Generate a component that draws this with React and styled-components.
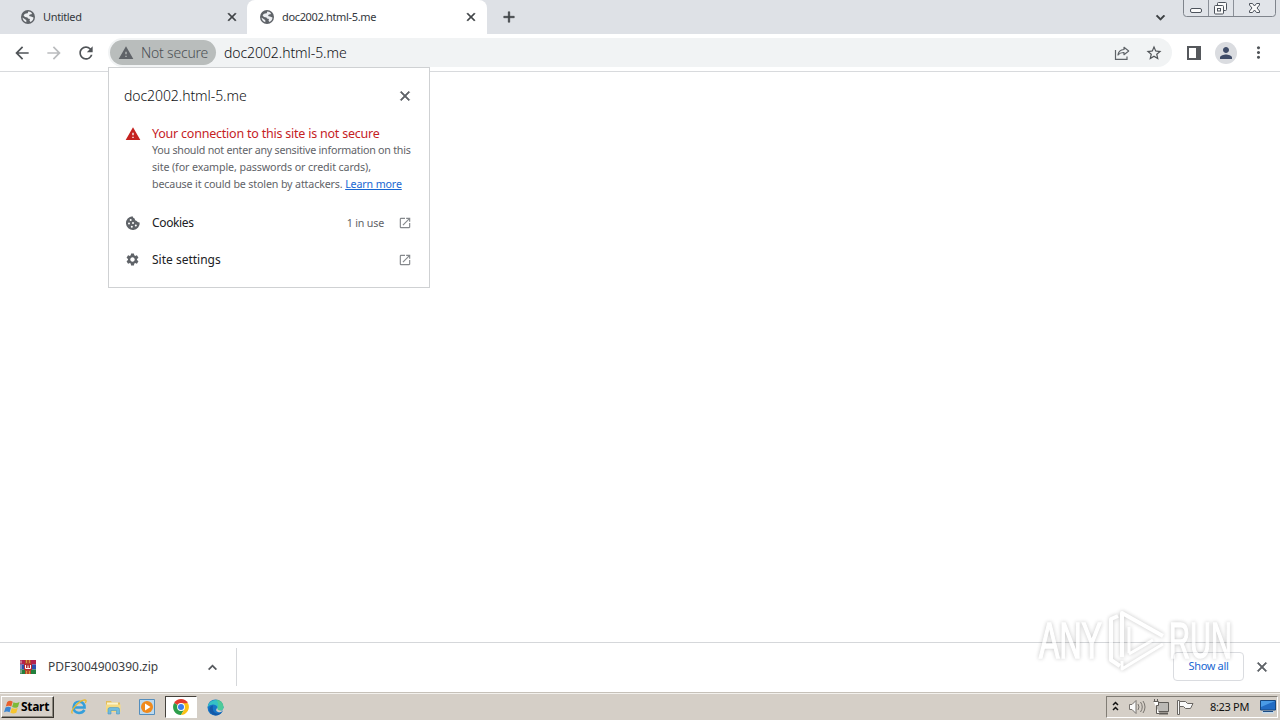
import React from "react";
import styled, { createGlobalStyle } from "styled-components";
import {
  MdArrowBack,
  MdArrowForward,
  MdRefresh,
  MdWarning,
  MdClose,
  MdAdd,
  MdExpandMore,
  MdExpandLess,
  MdStarBorder,
  MdMoreVert,
  MdPerson,
  MdSettings,
  MdOpenInNew,
} from "react-icons/md";

function App() {
  return (
    <Screen>
      <GlobalStyle />
      <TabStrip>
        <Tab $width={239}>
          <GlobeIcon />
          <TabTitle>Untitled</TabTitle>
          <BoldClose size={14} color="#3c4043" />
        </Tab>
        <Tab $width={240} $active>
          <GlobeIcon />
          <TabTitle>doc2002.html-5.me</TabTitle>
          <BoldClose size={14} color="#3c4043" />
        </Tab>
        <NewTab>
          <BoldAdd size={18} />
        </NewTab>
        <TabSearch>
          <BoldMore size={17} />
        </TabSearch>
        <WindowButtons />
      </TabStrip>

      <Toolbar>
        <NavButton>
          <MdArrowBack size={20} />
        </NavButton>
        <NavButton $disabled>
          <MdArrowForward size={20} />
        </NavButton>
        <NavButton>
          <MdRefresh size={20} />
        </NavButton>
        <Omnibox>
          <SecurityChip>
            <MdWarning size={16} />
            <ChipText>Not secure</ChipText>
          </SecurityChip>
          <Url>doc2002.html-5.me</Url>
          <OmniboxActions>
            <ShareIcon />
            <MdStarBorder size={18} />
          </OmniboxActions>
        </Omnibox>
        <ToolbarActions>
          <SidePanelIcon />
          <Avatar>
            <MdPerson size={18} />
          </Avatar>
          <MdMoreVert size={19} />
        </ToolbarActions>
      </Toolbar>

      <Page />

      <Popup>
        <PopupHeader>
          <PopupTitle>doc2002.html-5.me</PopupTitle>
          <BoldClose size={16} color="#5f6368" />
        </PopupHeader>
        <Warning>
          <MdWarning size={16} color="#c5221f" />
          <div>
            <WarningTitle>Your connection to this site is not secure</WarningTitle>
            <WarningLine $spacing="-0.24px">You should not enter any sensitive information on this</WarningLine>
            <WarningLine $spacing="-0.11px">site (for example, passwords or credit cards),</WarningLine>
            <WarningLine $spacing="-0.15px">
              because it could be stolen by attackers. <LearnMore>Learn more</LearnMore>
            </WarningLine>
          </div>
        </Warning>
        <PopupRow>
          <CookieIcon />
          <RowLabel $spacing="-0.35px">Cookies</RowLabel>
          <RowInfo>1 in use</RowInfo>
          <MdOpenInNew size={14} color="#85888c" />
        </PopupRow>
        <PopupRow>
          <MdSettings size={15} />
          <RowLabel $indent={12}>Site settings</RowLabel>
          <MdOpenInNew size={14} color="#85888c" />
        </PopupRow>
      </Popup>

      <DownloadBar>
        <DownloadItem>
          <ArchiveIcon />
          <FileName>PDF3004900390.zip</FileName>
          <BoldLess size={17} />
        </DownloadItem>
        <ShowAll>Show all</ShowAll>
        <BoldClose size={16} color="#5f6368" />
      </DownloadBar>

      <Taskbar>
        <StartButton>
          <WindowsFlag />
          <span>Start</span>
        </StartButton>
        <QuickLaunch>
          <TaskSlot>
            <ExplorerIcon />
          </TaskSlot>
          <TaskSlot>
            <FolderIcon />
          </TaskSlot>
          <TaskSlot>
            <PlayerIcon />
          </TaskSlot>
          <TaskSlot $active>
            <ChromeIcon />
          </TaskSlot>
          <TaskSlot>
            <EdgeIcon />
          </TaskSlot>
        </QuickLaunch>
        <Tray>
          <TrayIcons />
          <Clock>8:23 PM</Clock>
          <DesktopIcon />
        </Tray>
      </Taskbar>

      <Watermark />
    </Screen>
  );
}

function GlobeIcon() {
  return (
    <svg width="16" height="16" viewBox="0 0 16 16">
      <circle cx="8" cy="8" r="7" fill="#5f6368" />
      <path d="M8.300 2.600Q10.500 2.400 12 4.200L11.500 5.200 9.800 5.500 9 7 11 7.500 13.500 8.500Q13.400 11.500 10.300 13L9.500 11.500 10 10 8 9.500 7.500 8.500 5 8 3.600 6.500Q4.500 4.800 6 4.600L7.700 4.300z" fill="#eceef1" />
      <path d="M2.500 8.500L5 10.200 6.300 11.200V13.200Q2.900 12 2.500 8.500z" fill="#eceef1" />
    </svg>
  );
}

function CookieIcon() {
  return (
    <svg width="16" height="16" viewBox="0 0 16 16">
      <path d="M7.500 1.200Q8 3 9.600 3.600 9.600 5.800 11.700 6 12.500 7.600 14.700 7.400A6.900 6.900 0 1 1 7.500 1.200z" fill="#5f6368" />
      <g fill="#ffffff">
        <circle cx="5.700" cy="5" r="1" />
        <circle cx="4" cy="8.500" r="1" />
        <circle cx="8" cy="8" r="1" />
        <circle cx="6.800" cy="11.700" r="1" />
        <circle cx="10.800" cy="10.500" r="1" />
      </g>
    </svg>
  );
}

function WindowButtons() {
  return (
    <WindowFrame width="94" height="18" viewBox="0 0 94 18">
      <path d="M.5 0v13.500q0 3 3 3h86q3 0 3-3V0" fill="#e1e4e9" stroke="#7f848c" />
      <path d="M25.500 0v16M50.500 0v16" stroke="#8b9098" />
      <g fill="#fafafa" stroke="#4d535c">
        <rect x="7.500" y="8.500" width="11" height="4" rx="1.500" />
        <rect x="34.500" y="2.500" width="9" height="8" rx="1" />
        <rect x="31.500" y="5.500" width="9" height="8.500" rx="1" />
        <rect x="34.500" y="8.500" width="3" height="2.500" />
        <path d="M66.500 3.500h3l2 2.500 2-2.500h3v1.500L74 8l2.500 3v1.500h-3l-2-2.500-2 2.500h-3V11L69 8l-2.500-3z" />
      </g>
    </WindowFrame>
  );
}

function ShareIcon() {
  return (
    <svg width="16" height="16" viewBox="0 0 16 16" fill="none" stroke="#5f6368" strokeWidth="1.200">
      <path d="M1.500 5v9.400h11.500v-3" />
      <path d="M10 2.300l4.700 3.700L10 9.700V7.500Q6 7.300 4 10 4.500 4.900 10 4.500z" strokeLinejoin="round" />
    </svg>
  );
}

function SidePanelIcon() {
  return (
    <svg width="14" height="14" viewBox="0 0 14 14">
      <path d="M0 0h14v14H0zM2 2v10h7V2z" fill="#55585c" fillRule="evenodd" />
    </svg>
  );
}

function ArchiveIcon() {
  return (
    <svg width="16" height="16" viewBox="0 0 16 16">
      <path d="M0 1h16v4.500H0z" fill="#b3224d" />
      <path d="M0 5.500h16v5H0z" fill="#2c4fae" />
      <path d="M0 10.500h16V15H0z" fill="#23803c" />
      <path d="M1 1.500v3M1 6v4M1 11v3.500" stroke="#d9cfd9" />
      <path d="M5 1h6v14H5z" fill="#b6472c" />
      <path d="M4 5h8v6H4z" fill="#b62b33" />
      <path d="M5.500 6v3.500h5V6M8 6.500v3" stroke="#fff" fill="none" />
      <path d="M6.500 1v3M9.500 1v3M6.500 12v3M9.500 12v3" stroke="#d79542" />
    </svg>
  );
}

function WindowsFlag() {
  return (
    <svg width="17" height="16" viewBox="0 0 17 16">
      <path d="M3.200 3Q6 .8 8.700 2.800L7.300 7.500Q4.600 5.800 1.800 7.600z" fill="#e8602c" />
      <path d="M9.500 3.300Q12 4.800 15.500 3L14 7.900Q11 9.600 8.100 8z" fill="#7dba37" />
      <path d="M1.500 8.600Q4.300 6.800 7 8.600L5.600 13.300Q3 11.500 0 13.300z" fill="#3b86d2" />
      <path d="M7.800 9Q10.600 10.500 13.700 9L12.300 13.800Q9.300 15.400 6.400 13.800z" fill="#f6c52f" />
    </svg>
  );
}

function ExplorerIcon() {
  return (
    <svg width="18" height="18" viewBox="0 0 18 18" fill="none">
      <path d="M14.500 12Q12.500 15 9 15 3.500 14.500 3.500 9.300 4 4 9.200 3.700 14.500 4 14.600 9.500H5" stroke="#349fdb" strokeWidth="2.500" />
      <path d="M5.500 7.300Q7 4.200 10 4.500" stroke="#9bdcf6" />
      <path d="M2.500 15.500Q.5 14.500 4 9.500 9.500 2.500 14.500 1.800 17.300 1.800 15.300 5" stroke="#e8b92d" strokeWidth="1.300" />
    </svg>
  );
}

function FolderIcon() {
  return (
    <svg width="17" height="16" viewBox="0 0 17 16">
      <path d="M1 2h5l1 1.500h8V13H1z" fill="#e3bd5b" />
      <path d="M2 3.500h11V7H2z" fill="#fbf3cb" />
      <path d="M1 5.500h14.500V13H1z" fill="#f4da82" />
      <path d="M3 15V10.500Q3 8.500 5 8.500h7.500q2 0 2 2V15H11.500v-3.500H6V15z" fill="#70bbdd" stroke="#4b98c2" strokeWidth=".6" />
    </svg>
  );
}

function PlayerIcon() {
  return (
    <svg width="16" height="16" viewBox="0 0 16 16">
      <path d="M.5.500h15v15H.5z" fill="#bcd9ee" stroke="#548ebd" />
      <circle cx="8" cy="8" r="6" fill="#f08a1c" />
      <path d="M6 4.500v7L11.500 8z" fill="#fff" />
    </svg>
  );
}

function ChromeIcon() {
  return (
    <svg width="16" height="16" viewBox="0 0 16 16">
      <path d="M8 8L1.100 4A8 8 0 0 1 14.900 4z" fill="#e33b2e" />
      <path d="M8 8L1.100 4A8 8 0 0 0 8 16l3.500-6z" fill="#2d9e4b" />
      <path d="M8 4.300h7A8 8 0 0 1 8 16l3.500-6z" fill="#fbc116" />
      <circle cx="8" cy="8" r="3.900" fill="#fff" />
      <circle cx="8" cy="8" r="3" fill="#3b7ded" />
    </svg>
  );
}

function EdgeIcon() {
  return (
    <svg width="17" height="17" viewBox="0 0 17 17">
      <circle cx="8.500" cy="8.500" r="8" fill="#1675c7" />
      <path d="M.6 8A8 8 0 0 1 16.500 8Q16.500 11.500 13 11.500 9.500 11.500 10.500 9.200 10.500 6 6.500 5.500 2.500 5.300.6 8z" fill="#35c1c5" />
      <path d="M9 .5Q16 1 16.500 7.700 16.500 11.500 13 11.500 9.500 11.500 10.500 9.200 12.500 5 9 .5z" fill="#58cf88" opacity=".7" />
      <path d="M6 6.500Q4.500 13 10 14.500 13 15 15.500 12.500 12 17 7.500 16.300 1.500 14 2.500 9.500 3.500 6.500 6 6.500z" fill="#1459a8" />
      <path d="M10.500 8.500Q7.500 11.500 11 13 14 14 16 11.500L17 13V9l-2 2.500Q9.500 12 10.500 8.500z" fill="#d6d0c8" />
    </svg>
  );
}

function TrayIcons() {
  return (
    <svg width="88" height="18" viewBox="0 0 88 18" fill="none">
      <path d="M2 7l2.500-2.500L7 7M2 12l2.500-2.500L7 12" stroke="#111" strokeWidth="1.500" />
      <g stroke="#77736e" fill="#fafafa" strokeLinejoin="round">
        <path d="M18.500 6.500h2.500l4-4v13l-4-4h-2.500z" />
        <path d="M27 6q2 3 0 6M29.500 4q3.500 5 0 10M32 3q4 6 0 12" fill="none" />
      </g>
      <g stroke="#5e5b57">
        <path d="M45.500 4.500h12v9h-12z" fill="#bbb9b5" />
        <path d="M48 15.500h9" strokeWidth="2" />
        <path d="M42.500 3.500h5v4h-2v8h3M43.500 1v3M46.500 1v3" fill="#fff" />
      </g>
      <g stroke="#696662" fill="#fafafa">
        <path d="M66.500 2.500h2v14h-2z" />
        <path d="M68.500 3.500h6l2 2h5.500l-2.500 5h-5l-2-2h-4z" />
      </g>
    </svg>
  );
}

function DesktopIcon() {
  return (
    <svg width="16" height="14" viewBox="0 0 16 14">
      <path d="M.5.500h15v9.500H.5z" fill="#226cc4" stroke="#17477f" />
      <path d="M1 1h14L1 7z" fill="#4a9be6" />
      <path d="M2 12.500h12" stroke="#c3d9eb" strokeWidth="2" />
      <path d="M3 11.500h10" stroke="#1c4d86" />
    </svg>
  );
}

function Watermark() {
  return (
    <WatermarkSvg width="204" height="68" viewBox="0 0 204 68">
      <WatermarkText x="4" y="51" textLength="63" lengthAdjust="spacingAndGlyphs">
        ANY
      </WatermarkText>
      <g fill="none" stroke="#fff" strokeWidth="4" strokeLinejoin="round">
        <path d="M83 9l-7 3v41l9 6" />
        <path d="M87 50V6L128 29" />
        <path d="M87 54v8l41-25M94 46V20M94 47l24-14" strokeWidth="3" />
      </g>
      <WatermarkText x="134" y="51" textLength="63" lengthAdjust="spacingAndGlyphs">
        RUN
      </WatermarkText>
    </WatermarkSvg>
  );
}

const GlobalStyle = createGlobalStyle`
  * {
    box-sizing: border-box;
  }
  body {
    margin: 0;
    overflow: hidden;
    background: #ffffff;
    font-family: "Noto Sans", "DejaVu Sans", sans-serif;
  }
  svg {
    display: block;
    flex-shrink: 0;
  }
`;

// the icons carry an empty 24x24 path, only the drawn one gets the stroke
const BoldClose = styled(MdClose)`
  path:not([fill="none"]) {
    stroke: currentColor;
    stroke-width: 1px;
  }
`;

const BoldAdd = styled(MdAdd)`
  path:not([fill="none"]) {
    stroke: currentColor;
    stroke-width: 0.7px;
  }
`;

const BoldMore = styled(MdExpandMore)`
  path:not([fill="none"]) {
    stroke: currentColor;
    stroke-width: 1px;
  }
`;

const BoldLess = styled(MdExpandLess)`
  path:not([fill="none"]) {
    stroke: currentColor;
    stroke-width: 0.6px;
  }
`;

const Screen = styled.div`
  position: relative;
  display: flex;
  flex-direction: column;
  width: 1280px;
  height: 720px;
  white-space: nowrap;

  svg {
    stroke-width: 0;
  }
  svg [stroke]:not([stroke-width]) {
    stroke-width: 1px;
  }
  svg[stroke-width="1.200"] path {
    stroke-width: 1.2px;
  }
`;

const TabStrip = styled.div`
  display: flex;
  height: 34px;
  padding-left: 8px;
  background: #dee1e6;
`;

const Tab = styled.div`
  display: flex;
  align-items: center;
  width: ${(props) => props.$width}px;
  padding: 0 ${(props) => (props.$active ? "9px" : "8px")} 0 12px;
  border-radius: 8px 8px 0 0;
  background: ${(props) => (props.$active ? "#ffffff" : "transparent")};
`;

const TabTitle = styled.span`
  flex: 1;
  margin-left: 7px;
  font-size: 11px;
  line-height: 14px;
  letter-spacing: -0.35px;
  color: #34383d;
`;

const NewTab = styled.div`
  display: flex;
  align-items: center;
  margin-left: 13px;
  color: #3c4043;
`;

const TabSearch = styled.div`
  display: flex;
  align-items: center;
  margin-left: auto;
  color: #3c4043;
`;

const WindowFrame = styled.svg`
  margin: 0 3px 0 14px;
`;

const Toolbar = styled.div`
  display: flex;
  align-items: center;
  height: 38px;
  padding-left: 6px;
  border-bottom: 1px solid #d8dadd;
  background: #ffffff;
`;

const NavButton = styled.div`
  display: flex;
  justify-content: center;
  width: 32px;
  color: ${(props) => (props.$disabled ? "#babcbe" : "#505458")};
`;

const Omnibox = styled.div`
  display: flex;
  align-items: center;
  width: 1064px;
  height: 29px;
  margin-left: 6px;
  padding: 0 9px 0 2px;
  border-radius: 15px;
  background: #f1f3f4;
`;

const SecurityChip = styled.div`
  display: flex;
  align-items: center;
  width: 106px;
  height: 25px;
  padding-left: 8px;
  border-radius: 13px;
  background: #b9bdbc;
  color: #5f6368;
`;

const ChipText = styled.span`
  margin-left: 7px;
  font-size: 14px;
  font-weight: 300;
  letter-spacing: -0.2px;
  color: #4c5054;
`;

const Url = styled.span`
  margin-left: 8px;
  font-size: 14px;
  font-weight: 300;
  letter-spacing: -0.07px;
  color: #101114;
`;

const OmniboxActions = styled.div`
  display: flex;
  align-items: center;
  gap: 15px;
  margin-left: auto;
  color: #505458;
`;

const ToolbarActions = styled.div`
  display: flex;
  align-items: center;
  margin-left: 15px;
  color: #505458;
`;

const Avatar = styled.div`
  display: flex;
  align-items: center;
  justify-content: center;
  width: 22px;
  height: 22px;
  margin: 0 12px 0 14px;
  border-radius: 50%;
  background: #dadce0;
  color: #3f4c68;
`;

const Page = styled.div`
  flex: 1;
`;

const Popup = styled.div`
  position: absolute;
  top: 67px;
  left: 108px;
  width: 322px;
  height: 221px;
  padding: 17px 16px 0 15px;
  border: 1px solid #cfd1d3;
  background: #ffffff;
`;

const PopupHeader = styled.div`
  display: flex;
  align-items: center;
  justify-content: space-between;
  height: 22px;
`;

const PopupTitle = styled.span`
  padding-bottom: 1px;
  font-size: 14px;
  font-weight: 300;
  letter-spacing: -0.07px;
  color: #101114;
`;

const Warning = styled.div`
  display: flex;
  gap: 11px;
  margin: 19px 0 11px;
  padding-left: 1px;
`;

const WarningTitle = styled.div`
  height: 16px;
  font-size: 12.5px;
  line-height: 16px;
  letter-spacing: -0.22px;
  color: #c5221f;
`;

const WarningLine = styled.div`
  font-size: 10.7px;
  line-height: 17px;
  letter-spacing: ${(props) => props.$spacing};
  color: #5f6368;
`;

const LearnMore = styled.span`
  color: #1967d2;
  text-decoration: underline;
`;

const PopupRow = styled.div`
  display: flex;
  align-items: center;
  height: 37px;
  padding: 0 1px;
  color: #5f6368;
`;

const RowLabel = styled.span`
  flex: 1;
  margin-left: ${(props) => props.$indent || 11}px;
  font-size: 12px;
  letter-spacing: ${(props) => props.$spacing || "0"};
  color: #202124;
`;

const RowInfo = styled.span`
  margin-right: 14px;
  font-size: 10.7px;
  letter-spacing: -0.2px;
  color: #5f6368;
`;

const DownloadBar = styled.div`
  display: flex;
  align-items: center;
  height: 50px;
  padding: 0 10px 1px 0;
  border-top: 1px solid #d5d7da;
`;

const DownloadItem = styled.div`
  display: flex;
  align-items: center;
  width: 237px;
  height: 38px;
  margin-right: auto;
  padding: 0 15px 0 20px;
  border-right: 1px solid #d5d7da;
  color: #505458;
`;

const FileName = styled.span`
  flex: 1;
  margin-left: 12px;
  padding-bottom: 2px;
  font-size: 12px;
  color: #3c4043;
`;

const ShowAll = styled.div`
  width: 71px;
  height: 29px;
  margin: 0 10px 1px 0;
  border: 1px solid #dadce0;
  border-radius: 4px;
  font-size: 11px;
  line-height: 26px;
  text-align: center;
  letter-spacing: -0.35px;
  color: #1967d2;
`;

const Taskbar = styled.div`
  display: flex;
  align-items: center;
  height: 28px;
  padding: 1px 2px 0 1px;
  border-top: 1px solid #c6c1b9;
  background: #d5cfc7;
  box-shadow: inset 0 1px #f3f1ed;
`;

const StartButton = styled.div`
  display: flex;
  align-items: center;
  width: 53px;
  height: 22px;
  padding-left: 2px;
  border: 1px solid;
  border-color: #ffffff #38352f #38352f #ffffff;
  box-shadow: inset -1px -1px #8c887f;
  font-size: 12px;
  font-weight: bold;
  letter-spacing: -0.3px;
  line-height: 18px;
  color: #000000;

  span {
    padding-bottom: 1px;
  }
`;

const QuickLaunch = styled.div`
  display: flex;
  margin-left: 9px;
`;

const TaskSlot = styled.div`
  display: flex;
  align-items: center;
  justify-content: center;
  width: 32px;
  height: 22px;
  margin-right: 2px;
  border: 1px solid;
  border-color: ${(props) => (props.$active ? "#45423c #ffffff #ffffff #45423c" : "transparent")};
  background: ${(props) => (props.$active ? "#ffffff" : "transparent")};
`;

const Tray = styled.div`
  display: flex;
  align-items: center;
  width: 172px;
  height: 22px;
  margin-left: auto;
  padding: 0 1px 0 4px;
  border: 1px solid;
  border-color: #817d75 #ffffff #ffffff #817d75;
`;

const Clock = styled.span`
  flex: 1;
  padding-bottom: 1px;
  text-align: center;
  font-size: 11px;
  letter-spacing: -0.3px;
  color: #111111;
`;

const WatermarkSvg = styled.svg`
  position: absolute;
  top: 607px;
  left: 1035px;
  overflow: visible;
  opacity: 0.65;
  filter: drop-shadow(0 0 2px rgba(0, 0, 0, 0.35));
`;

const WatermarkText = styled.text`
  font-family: "Liberation Sans", Arial, sans-serif;
  font-size: 50px;
  fill: #ffffff;
  stroke: #ffffff;
  stroke-width: 1.5px;
`;

export default App;
